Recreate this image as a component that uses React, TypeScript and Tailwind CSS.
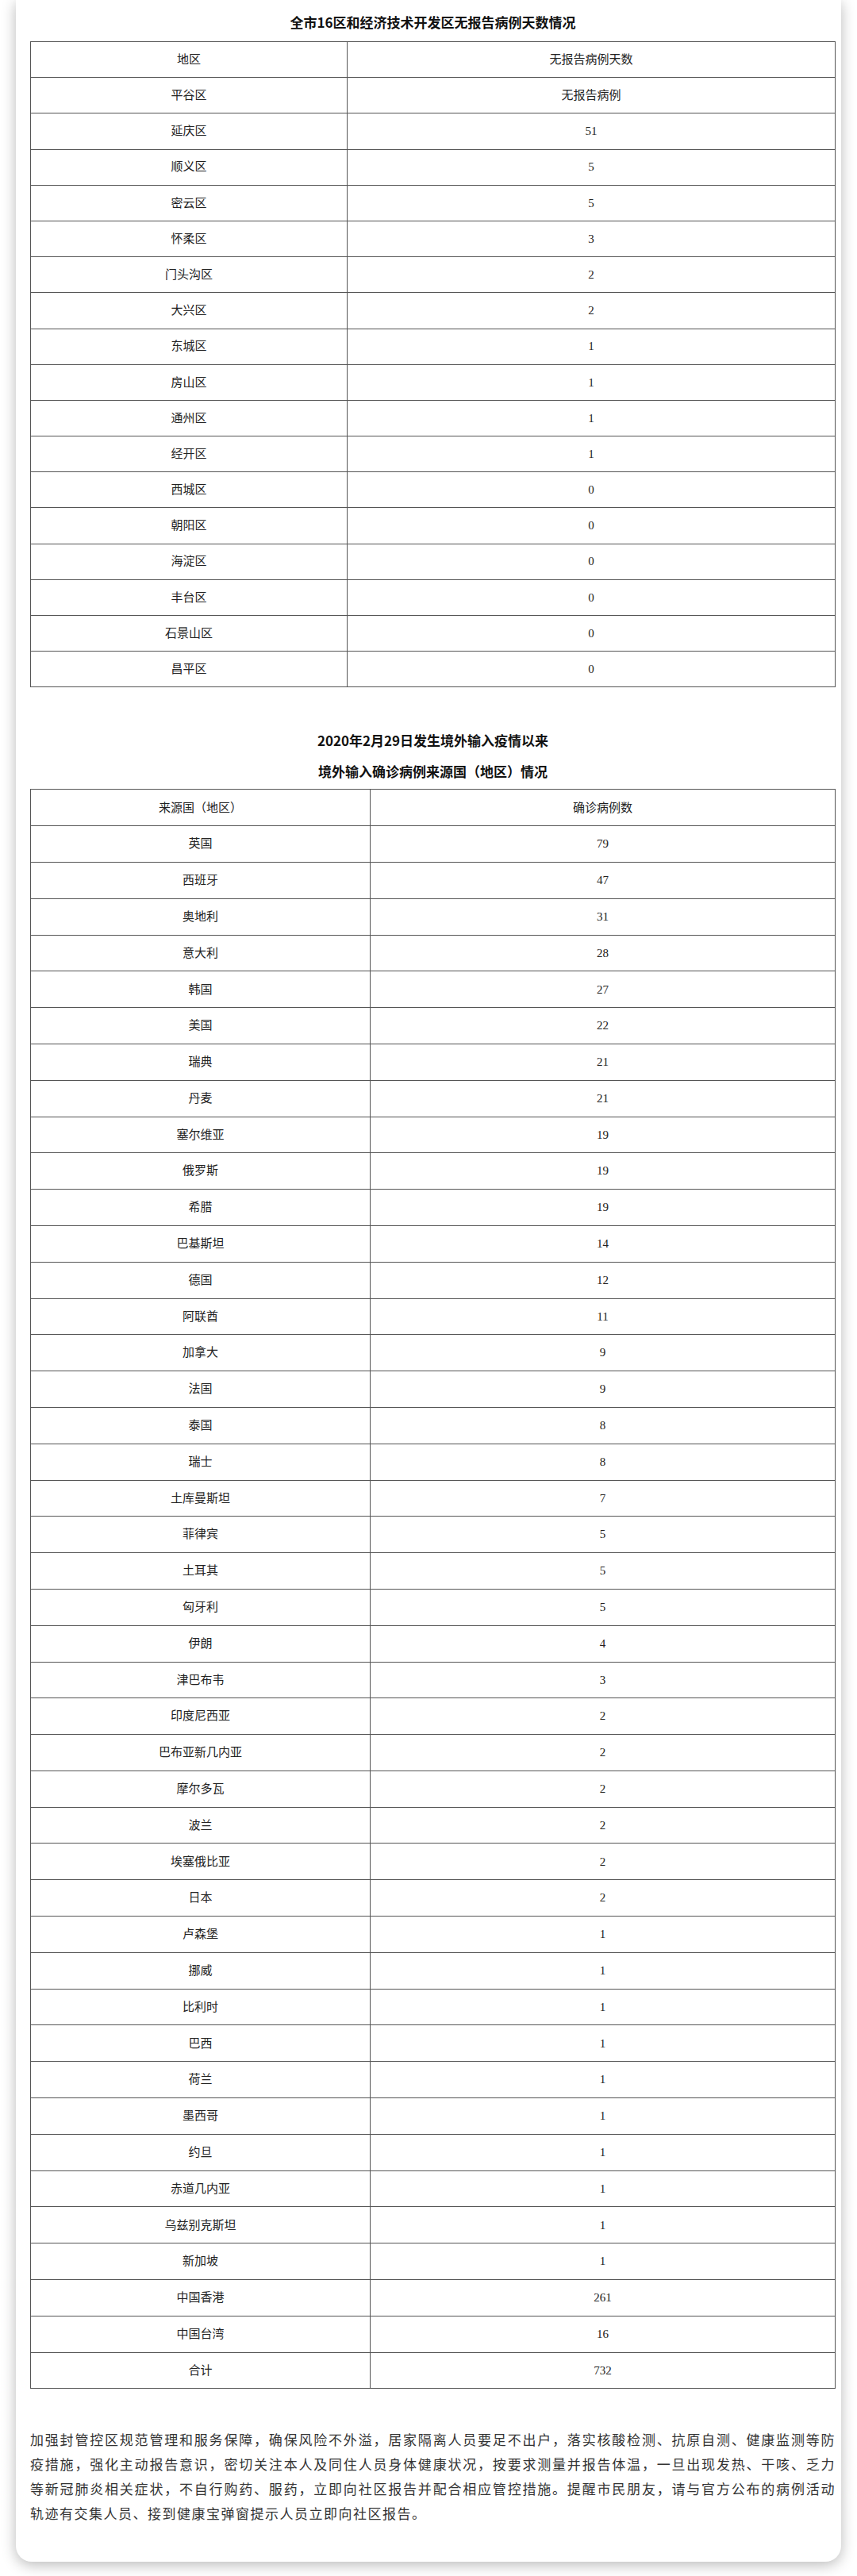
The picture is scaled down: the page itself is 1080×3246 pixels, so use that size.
import React from 'react'

const districts: [string, string][] = [
  ['平谷区', '无报告病例'],
  ['延庆区', '51'],
  ['顺义区', '5'],
  ['密云区', '5'],
  ['怀柔区', '3'],
  ['门头沟区', '2'],
  ['大兴区', '2'],
  ['东城区', '1'],
  ['房山区', '1'],
  ['通州区', '1'],
  ['经开区', '1'],
  ['西城区', '0'],
  ['朝阳区', '0'],
  ['海淀区', '0'],
  ['丰台区', '0'],
  ['石景山区', '0'],
  ['昌平区', '0'],
]

const sources: [string, string][] = [
  ['英国', '79'],
  ['西班牙', '47'],
  ['奥地利', '31'],
  ['意大利', '28'],
  ['韩国', '27'],
  ['美国', '22'],
  ['瑞典', '21'],
  ['丹麦', '21'],
  ['塞尔维亚', '19'],
  ['俄罗斯', '19'],
  ['希腊', '19'],
  ['巴基斯坦', '14'],
  ['德国', '12'],
  ['阿联酋', '11'],
  ['加拿大', '9'],
  ['法国', '9'],
  ['泰国', '8'],
  ['瑞士', '8'],
  ['土库曼斯坦', '7'],
  ['菲律宾', '5'],
  ['土耳其', '5'],
  ['匈牙利', '5'],
  ['伊朗', '4'],
  ['津巴布韦', '3'],
  ['印度尼西亚', '2'],
  ['巴布亚新几内亚', '2'],
  ['摩尔多瓦', '2'],
  ['波兰', '2'],
  ['埃塞俄比亚', '2'],
  ['日本', '2'],
  ['卢森堡', '1'],
  ['挪威', '1'],
  ['比利时', '1'],
  ['巴西', '1'],
  ['荷兰', '1'],
  ['墨西哥', '1'],
  ['约旦', '1'],
  ['赤道几内亚', '1'],
  ['乌兹别克斯坦', '1'],
  ['新加坡', '1'],
  ['中国香港', '261'],
  ['中国台湾', '16'],
  ['合计', '732'],
]

const serif = "font-['Liberation_Serif','Noto_Sans_CJK_SC',serif]"

// simple bordered two-column table, rows are fixed height like the source doc
const DataTable = ({
  head,
  rows,
  firstCol,
  rowH,
}: {
  head: [string, string]
  rows: [string, string][]
  firstCol: string
  rowH: string
}) => {
  return (
    <table className={`w-full border-collapse text-[15px] text-[#222] ${serif}`}>
      <tbody>
        {[head, ...rows].map(([a, b], idx) => (
          <tr key={idx} className={rowH}>
            <td className={`border border-[#555] text-center align-middle p-0 ${firstCol}`}>{a}</td>
            <td className="border border-[#555] text-center align-middle p-0">{b}</td>
          </tr>
        ))}
      </tbody>
    </table>
  )
}

export default function App() {
  return (
    <main className="min-h-screen bg-white px-5 font-['Noto_Sans_CJK_SC',sans-serif]">
      <div className="bg-white rounded-b-[20px] shadow-[0_4px_18px_rgba(0,0,0,0.28)] pl-[18px] pr-[7px] pt-[16px] pb-[46px]">
        <h2 className="text-center font-bold text-[17px] leading-[24px] text-[#111] mb-[12px]">
          全市16区和经济技术开发区无报告病例天数情况
        </h2>
        <DataTable head={['地区', '无报告病例天数']} rows={districts} firstCol="w-[399px]" rowH="h-[45.2px]" />

        <h2 className="text-center font-bold text-[17px] leading-[24px] text-[#111] mt-[55px]">
          2020年2月29日发生境外输入疫情以来
        </h2>
        <h2 className="text-center font-bold text-[17px] leading-[24px] text-[#111] mt-[15px] mb-[10px]">
          境外输入确诊病例来源国（地区）情况
        </h2>
        <DataTable head={['来源国（地区）', '确诊病例数']} rows={sources} firstCol="w-[428px]" rowH="h-[45.8px]" />

        <p className="mt-[49px] text-[17px] leading-[30.7px] tracking-[1.5px] text-justify text-[#333]">
          加强封管控区规范管理和服务保障，确保风险不外溢，居家隔离人员要足不出户，落实核酸检测、抗原自测、健康监测等防疫措施，强化主动报告意识，密切关注本人及同住人员身体健康状况，按要求测量并报告体温，一旦出现发热、干咳、乏力等新冠肺炎相关症状，不自行购药、服药，立即向社区报告并配合相应管控措施。提醒市民朋友，请与官方公布的病例活动轨迹有交集人员、接到健康宝弹窗提示人员立即向社区报告。
        </p>
      </div>
      <div className="h-[21px]" />
    </main>
  )
}
